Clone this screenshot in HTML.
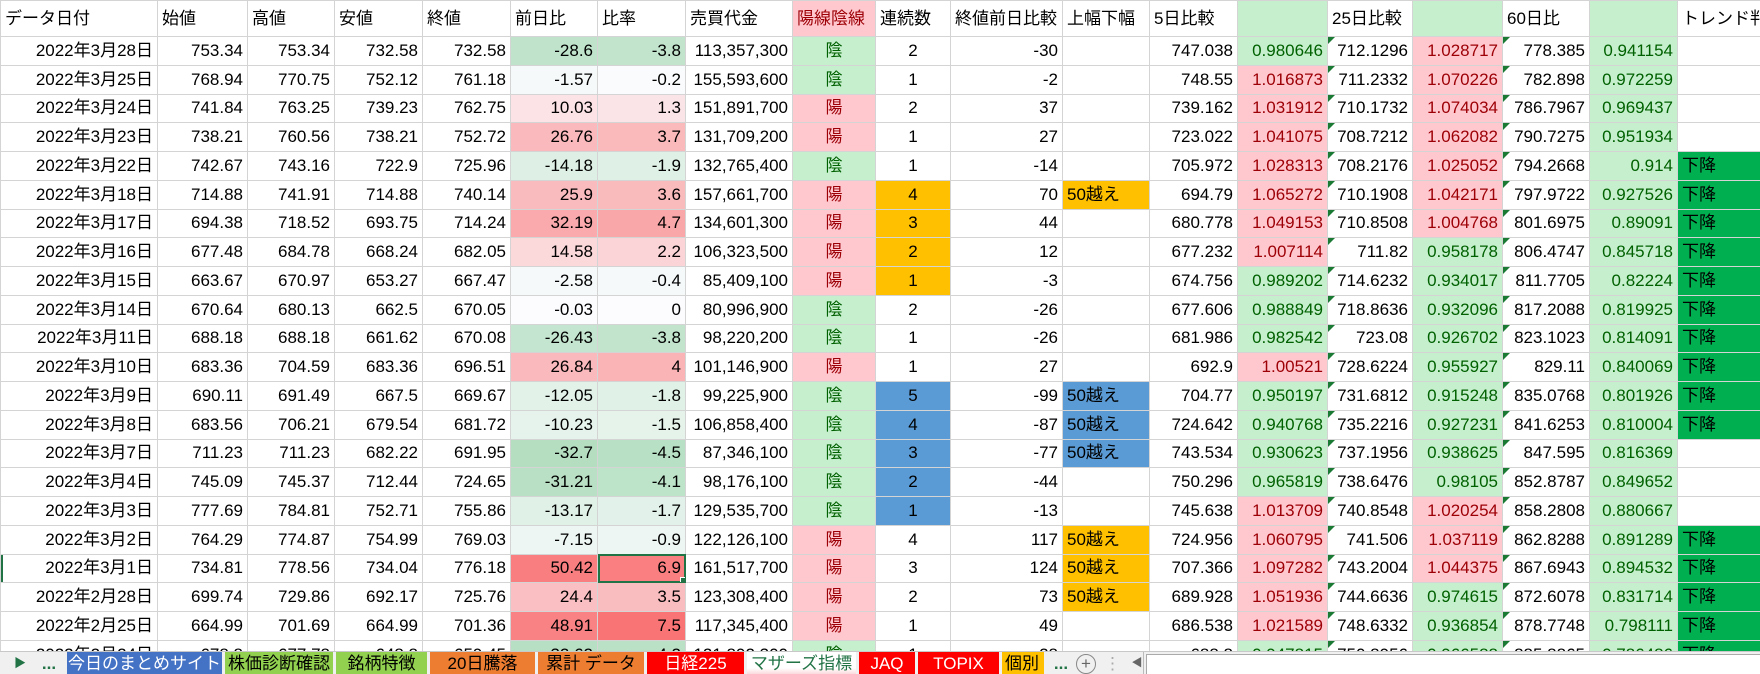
<!DOCTYPE html>
<html><head><meta charset="utf-8">
<style>
html,body{margin:0;padding:0;width:1760px;height:674px;overflow:hidden;background:#fff;}
body{position:relative;font-family:"Liberation Sans","Noto Sans CJK JP",sans-serif;font-size:17px;color:#000;}
table{position:absolute;left:0;top:0;border-collapse:collapse;table-layout:fixed;width:1777px;}
td{border:1px solid #d4d4d4;height:27.75px;padding:0 4px;text-align:right;white-space:nowrap;overflow:hidden;position:relative;line-height:20px;}
tr.h td{height:35px;text-align:left;}
.c{text-align:center}.l{text-align:left}
.p{background:#ffc7ce;color:#9c0006}
.g{background:#c6efce;color:#006100}
.y{background:#ffc7ce;color:#9c0006;text-align:center}
.i{background:#c6efce;color:#006100;text-align:center}
.o{background:#ffc000}
.b{background:#5b9bd5}
.t{background:#00b050;text-align:left}
.tr::before{content:"";position:absolute;left:0;top:0;width:0;height:0;border-top:7px solid #1a7a34;border-right:7px solid transparent;}
.sel{outline:2px solid #217346;outline-offset:-2px;}
.sel::after{content:"";position:absolute;right:-3px;bottom:-3px;width:6px;height:6px;background:#217346;border:1px solid #fff;}
#tabs{position:absolute;left:0;top:651px;width:1760px;height:23px;background:#f0f0f0;border-top:1px solid #c8c8c8;}
.tab{position:absolute;top:0;height:23px;line-height:23px;font-size:17px;text-align:center;overflow:hidden;white-space:nowrap;}
</style></head><body>
<table>
<colgroup><col style="width:157px"><col style="width:90px"><col style="width:87px"><col style="width:88px"><col style="width:88px"><col style="width:87px"><col style="width:88px"><col style="width:107px"><col style="width:83px"><col style="width:75px"><col style="width:112px"><col style="width:87px"><col style="width:88px"><col style="width:90px"><col style="width:85px"><col style="width:90px"><col style="width:87px"><col style="width:88px"><col style="width:100px"></colgroup>
<tr class="h"><td>データ日付</td><td>始値</td><td>高値</td><td>安値</td><td>終値</td><td>前日比</td><td>比率</td><td>売買代金</td><td class="p" style="text-align:left">陽線陰線</td><td>連続数</td><td>終値前日比較</td><td>上幅下幅</td><td>5日比較</td><td class="g"></td><td>25日比較</td><td class="g"></td><td>60日比</td><td class="g"></td><td>トレンド判</td></tr>
<tr><td>2022年3月28日</td><td>753.34</td><td>753.34</td><td>732.58</td><td>732.58</td><td style="background:rgb(191,227,203)">-28.6</td><td style="background:rgb(194,228,205)">-3.8</td><td>113,357,300</td><td class="i">陰</td><td class="c">2</td><td>-30</td><td></td><td>747.038</td><td class="g">0.980646</td><td class="tr">712.1296</td><td class="p">1.028717</td><td class="tr">778.385</td><td class="g">0.941154</td><td></td></tr>
<tr><td>2022年3月25日</td><td>768.94</td><td>770.75</td><td>752.12</td><td>761.18</td><td style="background:rgb(246,249,250)">-1.57</td><td style="background:rgb(249,251,252)">-0.2</td><td>155,593,600</td><td class="i">陰</td><td class="c">1</td><td>-2</td><td></td><td>748.55</td><td class="p">1.016873</td><td class="tr">711.2332</td><td class="p">1.070226</td><td class="tr">782.898</td><td class="g">0.972259</td><td></td></tr>
<tr><td>2022年3月24日</td><td>741.84</td><td>763.25</td><td>739.23</td><td>762.75</td><td style="background:rgb(251,227,230)">10.03</td><td style="background:rgb(251,228,231)">1.3</td><td>151,891,700</td><td class="y">陽</td><td class="c">2</td><td>37</td><td></td><td>739.162</td><td class="p">1.031912</td><td class="tr">710.1732</td><td class="p">1.074034</td><td class="tr">786.7967</td><td class="g">0.969437</td><td></td></tr>
<tr><td>2022年3月23日</td><td>738.21</td><td>760.56</td><td>738.21</td><td>752.72</td><td style="background:rgb(250,185,188)">26.76</td><td style="background:rgb(250,185,187)">3.7</td><td>131,709,200</td><td class="y">陽</td><td class="c">1</td><td>27</td><td></td><td>723.022</td><td class="p">1.041075</td><td class="tr">708.7212</td><td class="p">1.062082</td><td class="tr">790.7275</td><td class="g">0.951934</td><td></td></tr>
<tr><td>2022年3月22日</td><td>742.67</td><td>743.16</td><td>722.9</td><td>725.96</td><td style="background:rgb(222,240,229)">-14.18</td><td style="background:rgb(223,240,230)">-1.9</td><td>132,765,400</td><td class="i">陰</td><td class="c">1</td><td>-14</td><td></td><td>705.972</td><td class="p">1.028313</td><td class="tr">708.2176</td><td class="p">1.025052</td><td class="tr">794.2668</td><td class="g">0.914</td><td class="t">下降</td></tr>
<tr><td>2022年3月18日</td><td>714.88</td><td>741.91</td><td>714.88</td><td>740.14</td><td style="background:rgb(250,187,190)">25.9</td><td style="background:rgb(250,187,189)">3.6</td><td>157,661,700</td><td class="y">陽</td><td class="c o">4</td><td>70</td><td class="l o">50越え</td><td>694.79</td><td class="p">1.065272</td><td class="tr">710.1908</td><td class="p">1.042171</td><td class="tr">797.9722</td><td class="g">0.927526</td><td class="t">下降</td></tr>
<tr><td>2022年3月17日</td><td>694.38</td><td>718.52</td><td>693.75</td><td>714.24</td><td style="background:rgb(250,170,172)">32.19</td><td style="background:rgb(250,167,169)">4.7</td><td>134,601,300</td><td class="y">陽</td><td class="c o">3</td><td>44</td><td></td><td>680.778</td><td class="p">1.049153</td><td class="tr">710.8508</td><td class="p">1.004768</td><td class="tr">801.6975</td><td class="g">0.89091</td><td class="t">下降</td></tr>
<tr><td>2022年3月16日</td><td>677.48</td><td>684.78</td><td>668.24</td><td>682.05</td><td style="background:rgb(251,216,218)">14.58</td><td style="background:rgb(251,212,215)">2.2</td><td>106,323,500</td><td class="y">陽</td><td class="c o">2</td><td>12</td><td></td><td>677.232</td><td class="p">1.007114</td><td class="tr">711.82</td><td class="g">0.958178</td><td class="tr">806.4747</td><td class="g">0.845718</td><td class="t">下降</td></tr>
<tr><td>2022年3月15日</td><td>663.67</td><td>670.97</td><td>653.27</td><td>667.47</td><td style="background:rgb(245,249,250)">-2.58</td><td style="background:rgb(245,249,250)">-0.4</td><td>85,409,100</td><td class="y">陽</td><td class="c o">1</td><td>-3</td><td></td><td>674.756</td><td class="g">0.989202</td><td class="tr">714.6232</td><td class="g">0.934017</td><td class="tr">811.7705</td><td class="g">0.82224</td><td class="t">下降</td></tr>
<tr><td>2022年3月14日</td><td>670.64</td><td>680.13</td><td>662.5</td><td>670.05</td><td style="background:rgb(252,252,255)">-0.03</td><td style="background:rgb(252,252,255)">0</td><td>80,996,900</td><td class="i">陰</td><td class="c">2</td><td>-26</td><td></td><td>677.606</td><td class="g">0.988849</td><td class="tr">718.8636</td><td class="g">0.932096</td><td class="tr">817.2088</td><td class="g">0.819925</td><td class="t">下降</td></tr>
<tr><td>2022年3月11日</td><td>688.18</td><td>688.18</td><td>661.62</td><td>670.08</td><td style="background:rgb(196,229,207)">-26.43</td><td style="background:rgb(194,228,205)">-3.8</td><td>98,220,200</td><td class="i">陰</td><td class="c">1</td><td>-26</td><td></td><td>681.986</td><td class="g">0.982542</td><td class="tr">723.08</td><td class="g">0.926702</td><td class="tr">823.1023</td><td class="g">0.814091</td><td class="t">下降</td></tr>
<tr><td>2022年3月10日</td><td>683.36</td><td>704.59</td><td>683.36</td><td>696.51</td><td style="background:rgb(250,185,188)">26.84</td><td style="background:rgb(250,180,182)">4</td><td>101,146,900</td><td class="y">陽</td><td class="c">1</td><td>27</td><td></td><td>692.9</td><td class="p">1.00521</td><td class="tr">728.6224</td><td class="g">0.955927</td><td class="tr">829.11</td><td class="g">0.840069</td><td class="t">下降</td></tr>
<tr><td>2022年3月9日</td><td>690.11</td><td>691.49</td><td>667.5</td><td>669.67</td><td style="background:rgb(226,242,233)">-12.05</td><td style="background:rgb(224,241,231)">-1.8</td><td>99,225,900</td><td class="i">陰</td><td class="c b">5</td><td>-99</td><td class="l b">50越え</td><td>704.77</td><td class="g">0.950197</td><td class="tr">731.6812</td><td class="g">0.915248</td><td class="tr">835.0768</td><td class="g">0.801926</td><td class="t">下降</td></tr>
<tr><td>2022年3月8日</td><td>683.56</td><td>706.21</td><td>679.54</td><td>681.72</td><td style="background:rgb(230,243,236)">-10.23</td><td style="background:rgb(229,243,235)">-1.5</td><td>106,858,400</td><td class="i">陰</td><td class="c b">4</td><td>-87</td><td class="l b">50越え</td><td>724.642</td><td class="g">0.940768</td><td class="tr">735.2216</td><td class="g">0.927231</td><td class="tr">841.6253</td><td class="g">0.810004</td><td class="t">下降</td></tr>
<tr><td>2022年3月7日</td><td>711.23</td><td>711.23</td><td>682.22</td><td>691.95</td><td style="background:rgb(181,222,193)">-32.7</td><td style="background:rgb(183,224,196)">-4.5</td><td>87,346,100</td><td class="i">陰</td><td class="c b">3</td><td>-77</td><td class="l b">50越え</td><td>743.534</td><td class="g">0.930623</td><td class="tr">737.1956</td><td class="g">0.938625</td><td class="tr">847.595</td><td class="g">0.816369</td><td></td></tr>
<tr><td>2022年3月4日</td><td>745.09</td><td>745.37</td><td>712.44</td><td>724.65</td><td style="background:rgb(185,224,197)">-31.21</td><td style="background:rgb(189,227,201)">-4.1</td><td>98,176,100</td><td class="i">陰</td><td class="c b">2</td><td>-44</td><td></td><td>750.296</td><td class="g">0.965819</td><td class="tr">738.6476</td><td class="g">0.98105</td><td class="tr">852.8787</td><td class="g">0.849652</td><td></td></tr>
<tr><td>2022年3月3日</td><td>777.69</td><td>784.81</td><td>752.71</td><td>755.86</td><td style="background:rgb(224,241,231)">-13.17</td><td style="background:rgb(226,241,233)">-1.7</td><td>129,535,700</td><td class="i">陰</td><td class="c b">1</td><td>-13</td><td></td><td>745.638</td><td class="p">1.013709</td><td class="tr">740.8548</td><td class="p">1.020254</td><td class="tr">858.2808</td><td class="g">0.880667</td><td></td></tr>
<tr><td>2022年3月2日</td><td>764.29</td><td>774.87</td><td>754.99</td><td>769.03</td><td style="background:rgb(237,246,242)">-7.15</td><td style="background:rgb(238,246,243)">-0.9</td><td>122,126,100</td><td class="y">陽</td><td class="c">4</td><td>117</td><td class="l o">50越え</td><td>724.956</td><td class="p">1.060795</td><td class="tr">741.506</td><td class="p">1.037119</td><td class="tr">862.8288</td><td class="g">0.891289</td><td class="t">下降</td></tr>
<tr><td style="box-shadow:inset 2px 0 0 #217346">2022年3月1日</td><td>734.81</td><td>778.56</td><td>734.04</td><td>776.18</td><td style="background:rgb(249,126,128)">50.42</td><td class="sel" style="background:rgb(249,127,129)">6.9</td><td>161,517,700</td><td class="y">陽</td><td class="c">3</td><td>124</td><td class="l o">50越え</td><td>707.366</td><td class="p">1.097282</td><td class="tr">743.2004</td><td class="p">1.044375</td><td class="tr">867.6943</td><td class="g">0.894532</td><td class="t">下降</td></tr>
<tr><td>2022年2月28日</td><td>699.74</td><td>729.86</td><td>692.17</td><td>725.76</td><td style="background:rgb(250,191,194)">24.4</td><td style="background:rgb(250,189,191)">3.5</td><td>123,308,400</td><td class="y">陽</td><td class="c">2</td><td>73</td><td class="l o">50越え</td><td>689.928</td><td class="p">1.051936</td><td class="tr">744.6636</td><td class="g">0.974615</td><td class="tr">872.6078</td><td class="g">0.831714</td><td class="t">下降</td></tr>
<tr><td>2022年2月25日</td><td>664.99</td><td>701.69</td><td>664.99</td><td>701.36</td><td style="background:rgb(249,130,132)">48.91</td><td style="background:rgb(248,116,117)">7.5</td><td>117,345,400</td><td class="y">陽</td><td class="c">1</td><td>49</td><td></td><td>686.538</td><td class="p">1.021589</td><td class="tr">748.6332</td><td class="g">0.936854</td><td class="tr">878.7748</td><td class="g">0.798111</td><td class="t">下降</td></tr>
<tr><td>2022年2月24日</td><td>678.8</td><td>677.78</td><td>648.8</td><td>659.45</td><td style="background:rgb(182,223,195)">-32.62</td><td style="background:rgb(186,225,198)">-4.2</td><td>121,892,300</td><td class="i">陰</td><td class="c">1</td><td>-28</td><td></td><td>688.8</td><td class="g">0.947815</td><td class="tr">750.8956</td><td class="g">0.966588</td><td class="tr">885.8865</td><td class="g">0.786486</td><td class="t">下降</td></tr>
</table>
<div id="tabs">
<div class="tab" style="left:12px;width:16px;color:#217346;font-size:12px">&#9654;</div>
<div class="tab" style="left:38px;width:22px;color:#217346;font-weight:bold">...</div>
<div class="tab" style="left:67px;width:155px;background:#4472c4;color:#fff">今日のまとめサイト</div>
<div class="tab" style="left:225px;width:108px;background:#92d050">株価診断確認</div>
<div class="tab" style="left:336px;width:91px;background:#92d050">銘柄特徴</div>
<div class="tab" style="left:430px;width:105px;background:#ed7d31">20日騰落</div>
<div class="tab" style="left:538px;width:106px;background:#ed7d31">累計 データ</div>
<div class="tab" style="left:647px;width:97px;background:#ff0000;color:#fff">日経225</div>
<div class="tab" style="left:747px;width:109px;background:linear-gradient(#fff 70%,#fbd3d6);color:#217346">マザーズ指標</div>
<div class="tab" style="left:859px;width:56px;background:#ff0000;color:#fff">JAQ</div>
<div class="tab" style="left:918px;width:81px;background:#ff0000;color:#fff">TOPIX</div>
<div class="tab" style="left:1002px;width:42px;background:#ffc000;text-align:left;padding-left:3px;box-sizing:border-box">個別</div>
<div class="tab" style="left:1050px;width:22px;color:#217346;font-weight:bold">...</div>
<div class="tab" style="left:1076px;top:2px;width:18px;height:18px;line-height:17px;border:1px solid #888;border-radius:50%;color:#666;font-size:17px">+</div>
<div class="tab" style="left:1104px;width:10px;color:#aaa">⋮</div>
<div class="tab" style="left:1131px;width:12px;color:#666;font-size:11px;border-right:1px solid #bbb">&#9664;</div>
<div style="position:absolute;left:1146px;top:2px;width:614px;height:20px;background:#fff;border:1px solid #aaa"></div>
</div>
</body></html>
